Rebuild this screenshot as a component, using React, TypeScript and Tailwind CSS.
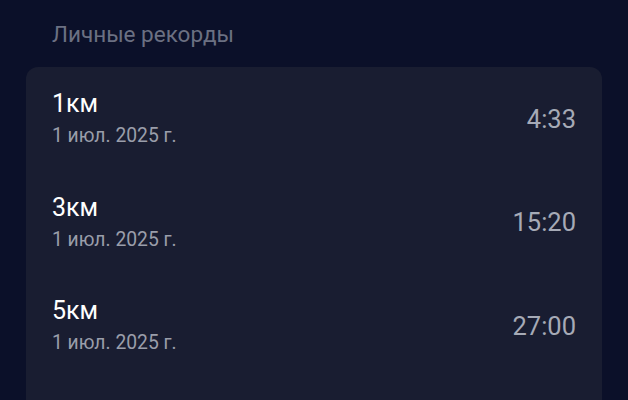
const records = [
  { distance: '1км', date: '1 июл. 2025 г.', time: '4:33' },
  { distance: '3км', date: '1 июл. 2025 г.', time: '15:20' },
  { distance: '5км', date: '1 июл. 2025 г.', time: '27:00' },
];

const App = () => {
  return (
    <div className="min-h-screen bg-[#0b1029] font-['Roboto',sans-serif] pt-[20px] px-[26px]">
      <h2 className="px-[26px] text-[22.5px] leading-[28px] text-[#6b7082] mb-[19px]">Личные рекорды</h2>
      <div className="bg-[#191d31] rounded-xl pb-[40px]">
        {records.map((r) => (
          <div key={r.distance} className="flex items-center justify-between px-[26px] pt-[22px] pb-[22.5px]">
            <div className="flex flex-col">
              <span className="text-[25px] leading-[30px] text-white">{r.distance}</span>
              <span className="mt-[5px] text-[19.3px] leading-[24px] text-[#9a9eaa]">{r.date}</span>
            </div>
            <span className="text-[25.5px] leading-[30px] text-[#a6aab6]">{r.time}</span>
          </div>
        ))}
      </div>
    </div>
  );
};

export default App;
